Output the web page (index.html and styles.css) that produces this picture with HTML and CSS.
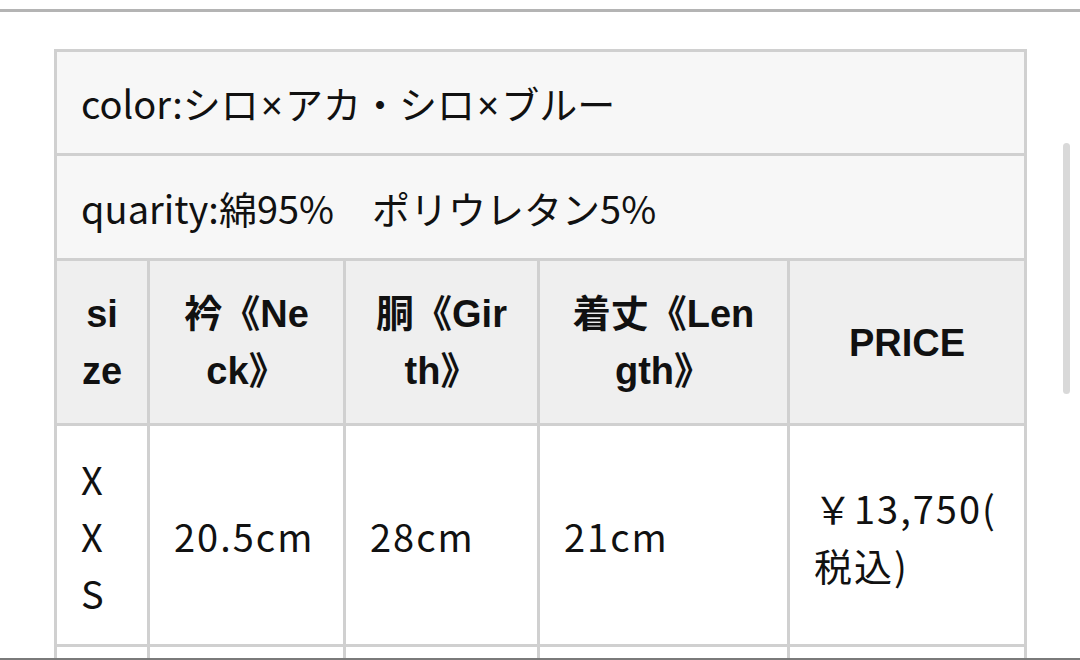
FILE: index.html
```html
<!DOCTYPE html>
<html lang="ja">
<head>
<meta charset="utf-8">
<link rel="stylesheet" href="styles.css">
</head>
<body>
<div class="topline"></div>
<main class="content">
  <table class="spec">
    <colgroup>
      <col class="c1"><col class="c2"><col class="c3"><col class="c4"><col class="c5">
    </colgroup>
    <tbody>
      <tr class="info"><td colspan="5">color:シロ<span class="times">×</span>アカ・シロ<span class="times">×</span>ブルー</td></tr>
      <tr class="info"><td colspan="5">quarity:綿95%　ポリウレタン5%</td></tr>
      <tr class="head">
        <th>size</th>
        <th>衿《Neck》</th>
        <th>胴《Girth》</th>
        <th>着丈《Length》</th>
        <th>PRICE</th>
      </tr>
      <tr class="data">
        <td>XXS</td>
        <td>20.5cm</td>
        <td>28cm</td>
        <td>21cm</td>
        <td>￥13,750(税込)</td>
      </tr>
      <tr class="data">
        <td>XS</td>
        <td>22cm</td>
        <td>30cm</td>
        <td>23cm</td>
        <td>￥13,750(税込)</td>
      </tr>
    </tbody>
  </table>
</main>
<div class="scrollbar"></div>
<div class="bottomline"></div>
</body>
</html>
```
FILE: styles.css
```css
html, body {
  margin: 0;
  padding: 0;
  background: #ffffff;
  overflow: hidden;
  height: 100%;
}
body {
  font-family: "Noto Sans CJK JP", "Noto Sans", sans-serif;
  color: #111111;
}
.topline {
  margin-top: 9px;
  height: 3px;
  background: #b4b4b4;
}
.content {
  padding: 37px 0 0 54px;
}
.spec {
  table-layout: fixed;
  border-collapse: separate;
  border-spacing: 0;
  width: 973px;
  border-top: 3px solid #d0d0d0;
  border-left: 3px solid #d0d0d0;
  font-size: 38px;
  line-height: 57px;
}
.c1 { width: 93px; }
.c2 { width: 196px; }
.c3 { width: 194px; }
.c4 { width: 250px; }
.c5 { width: 237px; }
.spec td, .spec th {
  padding: 22px 24px 22px;
  border-right: 3px solid #d0d0d0;
  border-bottom: 3px solid #d0d0d0;
  word-break: break-all;
  line-break: anywhere;
  vertical-align: middle;
}
.info td {
  background: #f7f7f7;
  text-align: left;
}
.info + .info td {
  padding-top: 23px;
}
.times {
  font-family: "Liberation Sans", sans-serif;
  line-height: 0;
  margin: 0 2px;
}
.spec .head th {
  background: #efefef;
  text-align: center;
  font-family: "Liberation Sans", "Noto Sans CJK JP", sans-serif;
  font-weight: 700;
  line-height: 57px;
  padding-top: 25px;
  padding-bottom: 23px;
}
.spec .data td {
  background: #ffffff;
  text-align: left;
  letter-spacing: 2px;
  padding-top: 24px;
  padding-bottom: 23px;
}
.scrollbar {
  position: fixed;
  top: 143px;
  right: 10px;
  width: 7px;
  height: 251px;
  border-radius: 4px;
  background: #d9d9d9;
}
.bottomline {
  position: fixed;
  left: 0;
  right: 0;
  bottom: 0;
  height: 2px;
  background: #7a7a7a;
}
```
